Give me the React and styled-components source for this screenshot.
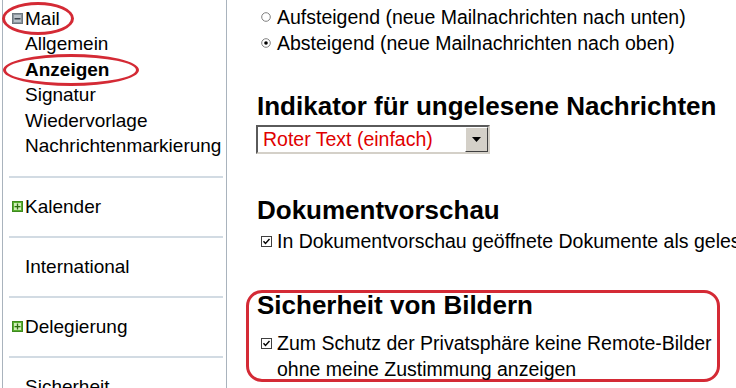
import styled, { createGlobalStyle } from "styled-components";

const Global = createGlobalStyle`
  html, body { margin: 0; padding: 0; background: #fff; }
  body {
    font-family: Arial, "Liberation Sans", sans-serif;
    color: #000;
    width: 736px;
    height: 388px;
    overflow: hidden;
  }
`;

const Page = styled.div`
  display: flex;
  width: 736px;
  height: 388px;
  overflow: hidden;
  position: relative;
`;

const Sidebar = styled.div`
  width: 225px;
  flex-shrink: 0;
  margin-left: 2px;
  border-left: 1px solid #a9b3bd;
  border-right: 1px solid #a9b3bd;
  font-size: 19px;
  padding: 6px 3px 0 6px;
  box-sizing: border-box;
  overflow: hidden;
`;

const GroupHead = styled.div`
  display: flex;
  align-items: center;
  height: 25px;
  line-height: 25px;
`;

const SubItem = styled.div`
  line-height: 25.5px;
  padding-left: 16px;
  font-weight: ${(p) => (p.$active ? "bold" : "normal")};
  white-space: nowrap;
`;

const SubList = styled.div`
  padding-bottom: 17px;
`;

const Section = styled.div`
  border-top: 2px solid #d2dbe3;
  height: 58px;
  display: flex;
  align-items: center;
  padding-left: ${(p) => (p.$icon ? "0" : "16px")};
`;

const Toggle = styled.span`
  width: 11px;
  height: 11px;
  margin: 0 2px 0 3px;
  display: inline-flex;
`;

const Content = styled.div`
  flex: 1;
  padding: 4px 0 0 30px;
  font-size: 19.5px;
  white-space: nowrap;
  overflow: hidden;
`;

const Option = styled.div`
  display: flex;
  align-items: center;
  line-height: 26px;
  padding-left: 4px;
  margin-top: ${(p) => p.$top || 0}px;
`;

const Mark = styled.span`
  width: 16px;
  display: inline-flex;
  flex-shrink: 0;
`;

const Heading = styled.h2`
  margin: 0;
  font-size: 26px;
  font-weight: bold;
  line-height: 26px;
  margin-top: ${(p) => p.$top}px;
`;

const Select = styled.div`
  display: flex;
  width: 234px;
  height: 29px;
  box-sizing: border-box;
  border: 2px solid;
  border-color: #5a5a5a #d4d0c8 #d4d0c8 #5a5a5a;
  margin-top: 6px;
  margin-left: -1px;
`;

const SelectText = styled.div`
  flex: 1;
  color: #e00000;
  padding-left: 5px;
  line-height: 25px;
`;

const SelectBtn = styled.div`
  width: 21px;
  background: #d4d0c8;
  border: 1px solid;
  border-color: #fff #404040 #404040 #fff;
  display: flex;
  align-items: center;
  justify-content: center;
`;

const Callout = styled.div`
  margin: 36px 0 0 -11px;
  width: 474px;
  height: 92px;
  box-sizing: border-box;
  border: 3px solid #d42a35;
  border-radius: 16px;
  padding: 0 0 0 8px;
`;

const Wrap = styled.div`
  padding-left: 20px;
  line-height: 27px;
`;

const Ring = styled.div`
  position: absolute;
  border: 3px solid #d42a35;
  border-radius: 50%;
  left: ${(p) => p.$x}px;
  top: ${(p) => p.$y}px;
  width: ${(p) => p.$w}px;
  height: ${(p) => p.$h}px;
  box-sizing: border-box;
  pointer-events: none;
`;

const ToggleIcon = ({ open }) => (
  <Toggle>
    <svg width="11" height="11" viewBox="0 0 11 11">
      {open ? (
        <>
          <rect x="0.5" y="0.5" width="10" height="10" fill="#8a949c" stroke="#6d7780" />
          <rect x="2" y="2" width="7" height="7" fill="#b8c0c8" />
          <rect x="2.5" y="5" width="6" height="1.5" fill="#3d4650" />
        </>
      ) : (
        <>
          <rect x="0.5" y="0.5" width="10" height="10" fill="#58b030" stroke="#3f8a1f" />
          <rect x="2" y="2" width="7" height="7" fill="#cfeeb8" />
          <rect x="2.5" y="5" width="6" height="1.3" fill="#2e6e12" />
          <rect x="4.85" y="2.5" width="1.3" height="6" fill="#2e6e12" />
        </>
      )}
    </svg>
  </Toggle>
);

const Radio = ({ on }) => (
  <Mark>
    <svg width="10" height="10" viewBox="0 0 10 10">
      <circle cx="5" cy="5" r="4.3" fill="#fff" stroke="#808080" />
      {on && <circle cx="5" cy="5" r="1.8" fill="#000" />}
    </svg>
  </Mark>
);

const Check = () => (
  <Mark>
    <svg width="11" height="11" viewBox="0 0 11 11">
      <rect x="0.5" y="0.5" width="10" height="10" fill="#fff" stroke="#404040" />
      <path d="M2.5 5.2 L4.5 7.5 L8.5 3" fill="none" stroke="#000" strokeWidth="1.4" />
    </svg>
  </Mark>
);

export default function App() {
  return (
    <>
      <Global />
      <Page>
        <Sidebar>
          <SubList>
            <GroupHead>
              <ToggleIcon open />
              Mail
            </GroupHead>
            <SubItem>Allgemein</SubItem>
            <SubItem $active>Anzeigen</SubItem>
            <SubItem>Signatur</SubItem>
            <SubItem>Wiedervorlage</SubItem>
            <SubItem>Nachrichtenmarkierung</SubItem>
          </SubList>
          <Section $icon>
            <ToggleIcon />
            Kalender
          </Section>
          <Section>International</Section>
          <Section $icon>
            <ToggleIcon />
            Delegierung
          </Section>
          <Section>Sicherheit</Section>
        </Sidebar>
        <Content>
          <Option>
            <Radio />
            Aufsteigend (neue Mailnachrichten nach unten)
          </Option>
          <Option>
            <Radio on />
            Absteigend (neue Mailnachrichten nach oben)
          </Option>
          <Heading $top={37}>Indikator für ungelesene Nachrichten</Heading>
          <Select>
            <SelectText>Roter Text (einfach)</SelectText>
            <SelectBtn>
              <svg width="9" height="5" viewBox="0 0 9 5">
                <path d="M0 0 H9 L4.5 5 Z" fill="#000" />
              </svg>
            </SelectBtn>
          </Select>
          <Heading $top={43}>Dokumentvorschau</Heading>
          <Option $top={5}>
            <Check />
            In Dokumentvorschau geöffnete Dokumente als gelesen markieren
          </Option>
          <Callout>
            <Heading $top={-1}>Sicherheit von Bildern</Heading>
            <Option $top={12}>
              <Check />
              Zum Schutz der Privatsphäre keine Remote-Bilder
            </Option>
            <Wrap>ohne meine Zustimmung anzeigen</Wrap>
          </Callout>
        </Content>
        <Ring $x={2} $y={2} $w={72} $h={33} />
        <Ring $x={3} $y={54} $w={136} $h={32} />
      </Page>
    </>
  );
}
